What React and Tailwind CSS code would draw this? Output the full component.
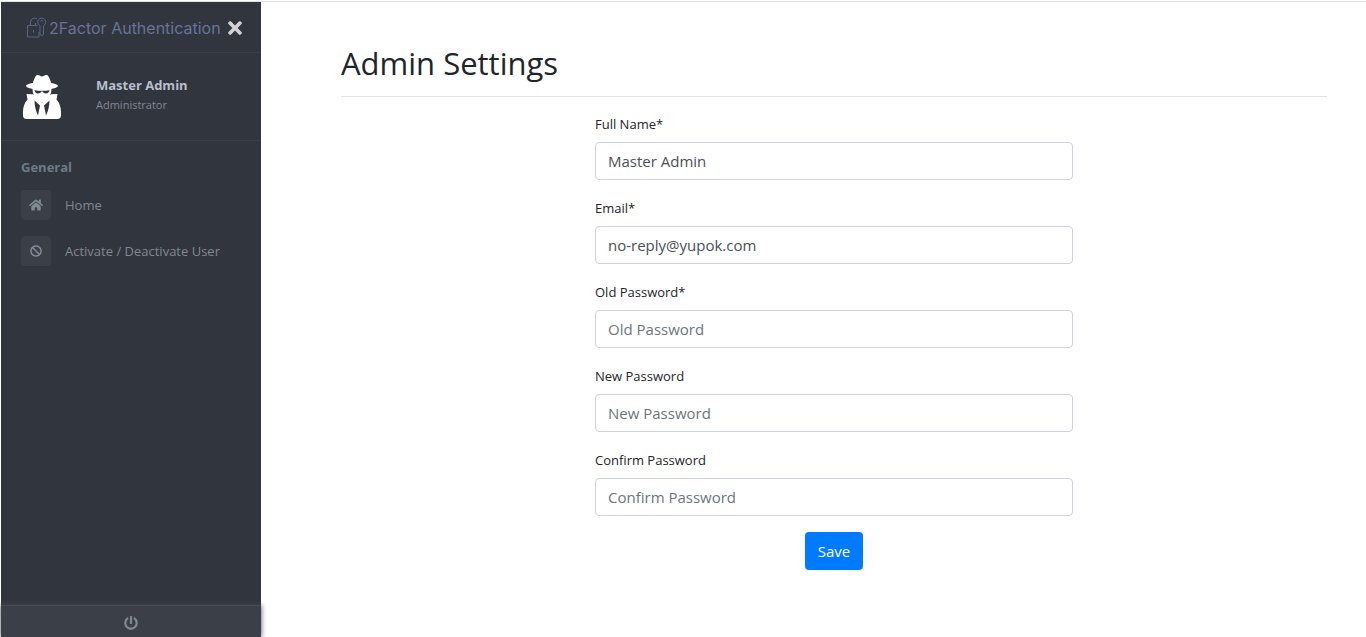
import { FaBan, FaHome, FaPowerOff, FaTimes } from "react-icons/fa";

const MENU = [
  { label: "Home", icon: FaHome },
  { label: "Activate / Deactivate User", icon: FaBan },
];

const FIELDS = [
  { id: "full-name", label: "Full Name*", type: "text", value: "Master Admin" },
  { id: "email", label: "Email*", type: "email", value: "no-reply@yupok.com" },
  { id: "old-password", label: "Old Password*", type: "password", placeholder: "Old Password" },
  { id: "new-password", label: "New Password", type: "password", placeholder: "New Password" },
  { id: "confirm-password", label: "Confirm Password", type: "password", placeholder: "Confirm Password" },
];

function LockKeyLogo() {
  return (
    <svg viewBox="0 0 22 22" className="h-[22px] w-[22px] shrink-0" fill="none" stroke="#5b6385" strokeWidth="1" aria-hidden="true">
      <path d="M12.500 8.500H2.500v11.500h11.500V15" />
      <path d="M5.500 8.500V5a4 4 0 0 1 6.500-3" />
      <path d="M10.500 8.500V6" />
      <path d="M15 8.600a4 4 0 1 1 3.500 0v8.400l-1.700 2-1.800-2Z" />
      <path d="M15.300 4.500l1.500-1.300 1.500 1.300" />
      <path d="M8.500 13v2.500" />
    </svg>
  );
}

function AgentAvatar() {
  return (
    <svg viewBox="0 0 38 44" className="h-11 w-[38px] shrink-0" aria-hidden="true">
      <g fill="#fff">
        <path d="M12.500 1.500C13.500-.2 15.500-.2 17 .8c1.300.8 2.700.8 4 0 1.500-1 3.500-1 4.500.7 1.500 2.500 2.200 4.500 2.600 6.500 3.800.6 6.700 1.600 6.900 2.700.2 2.300-7 3.800-16 3.800S2.800 13 3 10.700c.1-1.100 3-2.100 6.900-2.700.4-2 1.100-4 2.600-6.500Z" />
        <path d="M9.500 13.500h19c0 5-2 9.500-5.500 12.500l-4 2-4-2c-3.500-3-5.500-7.500-5.500-12.500Z" />
        <path d="M3.500 19l6.500.3L19 28l9-8.700 6.500-.3-1 5.500C36.800 28 38 32.500 38 37v3.500c0 2.200-1.300 3.500-3.500 3.500h-31C1.300 44 0 42.700 0 40.500V37c0-4.500 1.200-9 4.500-12.500Z" />
      </g>
      <g fill="#31353d">
        <path d="M11.500 15.300c4.800.7 10.200.7 15 0-.2 1.900-1.500 3.200-3.500 3.200-1.800 0-2.800-.8-3.300-2h-1.400c-.5 1.200-1.500 2-3.300 2-2 0-3.300-1.300-3.500-3.200Z" />
        <path d="M11.500 25.500l5.500 5-2 10c-2.200-4.500-3.400-9.500-3.500-15ZM26.500 25.500l-5.500 5 2 10c2.200-4.500 3.400-9.500 3.500-15Z" />
      </g>
    </svg>
  );
}

function Sidebar() {
  return (
    <aside className="flex w-[260px] shrink-0 flex-col bg-[#31353d]">
      <div className="flex h-[51px] items-center border-b border-[#3a3f48] pl-6 pt-0.5">
        <LockKeyLogo />
        <a href="#home" className="ml-0.5 whitespace-nowrap font-[Inter,sans-serif] text-base text-[#69739a]">
          2Factor Authentication
        </a>
        <button type="button" aria-label="Close sidebar" className="ml-1 text-[#d3d3d3]">
          <FaTimes className="h-5 w-5" />
        </button>
      </div>

      <div className="flex h-[88px] items-start border-b border-[#3a3f48] px-[22px] pt-[22px]">
        <AgentAvatar />
        <div className="ml-[35px] flex flex-col">
          <span className="text-[13px] leading-5 font-bold text-[#b8bfce]">Master Admin</span>
          <span className="text-[11px] leading-5 text-[#818896]">Administrator</span>
        </div>
      </div>

      <nav className="grow px-5 pt-4" aria-label="General">
        <h2 className="mb-3 text-[13px] leading-[21px] font-bold text-[#6c7b88]">General</h2>
        <ul className="flex flex-col gap-4">
          {MENU.map(({ label, icon: Icon }) => (
            <li key={label}>
              <a href="#menu" className="flex items-center gap-3.5 text-[13px] text-[#818896]">
                <span className="flex h-[30px] w-[30px] items-center justify-center rounded bg-[#3a3f48]">
                  <Icon className={Icon === FaHome ? "h-3.5 w-3.5" : "h-3 w-3"} />
                </span>
                <span className="pt-0.5">{label}</span>
              </a>
            </li>
          ))}
        </ul>
      </nav>

      <div className="flex h-8 border-t border-[#464a52] bg-[#3a3f48] shadow-[0_0_5px_#464a52]">
        <button type="button" aria-label="Log out" className="flex grow items-center justify-center pt-0.5 text-[#818896]">
          <FaPowerOff className="h-3.5 w-3.5" />
        </button>
      </div>
    </aside>
  );
}

function Field({ id, label, type, value, placeholder }) {
  return (
    <div className="mb-4 flex flex-col gap-1.5">
      <label htmlFor={id} className="text-[13px] leading-6">
        {label}
      </label>
      <input
        id={id}
        type={type}
        defaultValue={value}
        placeholder={placeholder}
        className="h-[38px] w-full rounded border border-[#ced4da] bg-white px-3 text-[15px] text-[#495057] placeholder:text-[#6c757d]"
      />
    </div>
  );
}

export default function App() {
  return (
    <div className="flex min-h-screen flex-col bg-white pl-px pt-px font-['Open_Sans','Noto_Sans',sans-serif] text-[#212529]">
      <div className="flex grow border-t border-[#dfe3e6]">
        <Sidebar />
        <main className="grow pl-20 pr-[39px] pt-[41px]">
          <h1 className="text-[31px] leading-10">Admin Settings</h1>
          <hr className="mb-[15px] mt-[13px] border-[#e2e3e4]" />
          <div className="-mx-[15px] flex justify-center">
            <form className="w-1/2 px-[15px]">
              {FIELDS.map((field) => (
                <Field key={field.id} {...field} />
              ))}
              <div className="flex justify-center">
                <button type="button" className="h-[38px] rounded bg-[#007bff] px-[13px] text-[15px] text-white">
                  Save
                </button>
              </div>
            </form>
          </div>
        </main>
      </div>
    </div>
  );
}
